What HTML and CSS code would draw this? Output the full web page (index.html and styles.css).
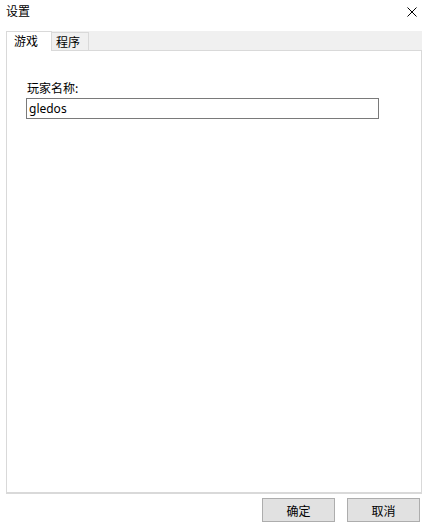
FILE: index.html
```html
<!DOCTYPE html>
<html lang="zh">
<head>
<meta charset="utf-8">
<title>设置</title>
<link rel="stylesheet" href="styles.css">
</head>
<body>
<div class="dialog">
  <div class="titlebar">
    <span class="title">设置</span>
    <svg class="close" width="10" height="10" viewBox="0 0 10 10"><path d="M0.5 0.5 L9.5 9.5 M9.5 0.5 L0.5 9.5" stroke="#000" stroke-width="1" fill="none"/></svg>
  </div>
  <div class="tabs">
    <div class="tab active">游戏</div>
    <div class="tab">程序</div>
  </div>
  <div class="panel">
    <label class="label" for="name">玩家名称:</label>
    <input class="field" id="name" type="text" value="gledos">
  </div>
  <div class="buttons">
    <button class="btn">确定</button>
    <button class="btn">取消</button>
  </div>
</div>
</body>
</html>
```
FILE: styles.css
```css
html, body {
  margin: 0;
  padding: 0;
  background: #fff;
}
body {
  font-family: "Noto Sans CJK SC", "Noto Sans", sans-serif;
  font-size: 12px;
  color: #000;
}
.dialog {
  width: 430px;
  height: 526px;
  display: flex;
  flex-direction: column;
}
.titlebar {
  height: 31px;
  display: flex;
  align-items: flex-start;
  justify-content: space-between;
  padding: 0 13px 0 6px;
  box-sizing: border-box;
}
.title {
  margin-top: 3px;
  line-height: 16px;
}
.close {
  margin-top: 7px;
}
.tabs {
  margin: 0 8px 0 6px;
  height: 19px;
  background: #f0f0f0;
  display: flex;
  align-items: flex-end;
  position: relative;
  z-index: 1;
}
.tab {
  box-sizing: border-box;
  height: 18px;
  border: 1px solid #d9d9d9;
  border-bottom: none;
  padding: 0 6px 0 6px;
  line-height: 17px;
  background: #f0f0f0;
  margin-bottom: 0;
}
.tab + .tab {
  border-left: none;
  padding: 0 8px 0 4px;
}
.tab.active {
  height: 20px;
  margin-bottom: -1px;
  background: #fff;
  padding: 0 13px 0 7px;
  line-height: 18px;
}
.panel {
  margin: 0 8px 0 6px;
  height: 444px;
  box-sizing: border-box;
  border: 1px solid #d9d9d9;
  border-bottom: 2px solid #d9d9d9;
  background: #fff;
  padding: 29px 0 0 19px;
  display: flex;
  flex-direction: column;
  align-items: flex-start;
}
.label {
  line-height: 16px;
  margin-left: 1px;
  margin-bottom: 2px;
}
.field {
  box-sizing: border-box;
  width: 353px;
  height: 21px;
  border: 1px solid #7a7a7a;
  padding: 0 2px;
  margin: 0;
  font-family: "Noto Sans", "Noto Sans CJK SC", sans-serif;
  font-size: 12px;
  color: #000;
  outline: none;
}
.buttons {
  display: flex;
  justify-content: flex-end;
  gap: 12px;
  margin: 4px 10px 0 0;
}
.btn {
  box-sizing: border-box;
  width: 73px;
  height: 24px;
  border: 1px solid #adadad;
  background: #e1e1e1;
  font-family: "Noto Sans CJK SC", sans-serif;
  font-size: 12px;
  color: #000;
  padding: 0;
  margin: 0;
}
```
